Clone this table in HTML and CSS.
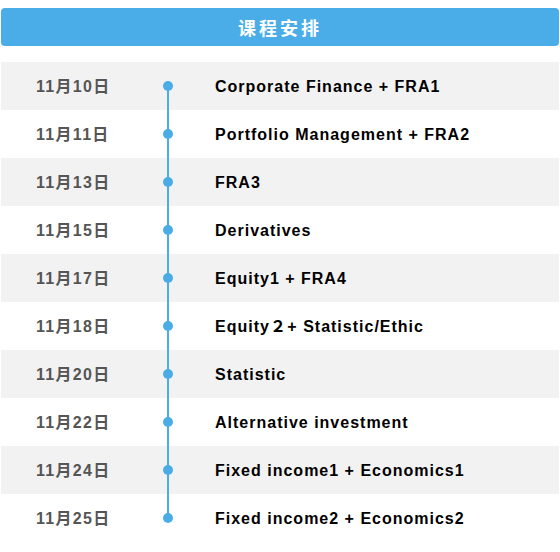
FILE: index.html
```html
<!DOCTYPE html>
<html lang="zh">
<head>
<meta charset="utf-8">
<link rel="stylesheet" href="styles.css">
</head>
<body>
<div class="page">
  <div class="header">课程安排</div>
  <div class="list">
    <div class="row gray"><div class="date">11月10日</div><div class="node first"><span class="dot"></span></div><div class="title">Corporate Finance + FRA1</div></div>
    <div class="row"><div class="date">11月11日</div><div class="node"><span class="dot"></span></div><div class="title">Portfolio Management + FRA2</div></div>
    <div class="row gray"><div class="date">11月13日</div><div class="node"><span class="dot"></span></div><div class="title">FRA3</div></div>
    <div class="row"><div class="date">11月15日</div><div class="node"><span class="dot"></span></div><div class="title">Derivatives</div></div>
    <div class="row gray"><div class="date">11月17日</div><div class="node"><span class="dot"></span></div><div class="title">Equity1 + FRA4</div></div>
    <div class="row"><div class="date">11月18日</div><div class="node"><span class="dot"></span></div><div class="title">Equity<span class="fw">２</span> + Statistic/Ethic</div></div>
    <div class="row gray"><div class="date">11月20日</div><div class="node"><span class="dot"></span></div><div class="title">Statistic</div></div>
    <div class="row"><div class="date">11月22日</div><div class="node"><span class="dot"></span></div><div class="title">Alternative investment</div></div>
    <div class="row gray"><div class="date">11月24日</div><div class="node"><span class="dot"></span></div><div class="title">Fixed income1 + Economics1</div></div>
    <div class="row"><div class="date">11月25日</div><div class="node last"><span class="dot"></span></div><div class="title">Fixed income2 + Economics2</div></div>
  </div>
</div>
</body>
</html>
```
FILE: styles.css
```css
* { box-sizing: border-box; }
html, body { margin: 0; padding: 0; background: #fff; }
body { font-family: "Liberation Sans", Arial, "Noto Sans CJK SC", sans-serif; }
.page { padding: 8px 1px 0 1px; width: 560px; }
.header {
  height: 38px;
  background: #4aade8;
  border-radius: 4px;
  color: #fff;
  font-size: 18px;
  font-weight: bold;
  letter-spacing: 3px;
  display: flex;
  align-items: center;
  justify-content: center;
}
.list { margin-top: 16px; }
.row {
  height: 48px;
  display: grid;
  grid-template-columns: 127px 10px 1fr;
  align-items: center;
  padding-left: 35px;
  background: #fff;
}
.row.gray { background: #f2f2f2; }
.date {
  color: #555;
  font-size: 16px;
  font-weight: bold;
  letter-spacing: 1.3px;
  line-height: 16px;
  height: 16px;
  margin-top: 1px;
}
.node {
  position: relative;
  height: 48px;
  display: flex;
  align-items: center;
  justify-content: center;
}
.node::before {
  content: "";
  position: absolute;
  left: 4px;
  width: 2px;
  top: 0;
  bottom: 0;
  background: #4aade8;
}
.node.first::before { top: 24px; }
.node.last::before { bottom: 24px; }
.dot {
  position: relative;
  width: 10px;
  height: 10px;
  border-radius: 50%;
  background: #4aade8;
}
.title {
  padding-left: 42px;
  color: #000;
  font-size: 16px;
  font-weight: bold;
  letter-spacing: 1px;
  white-space: nowrap;
  line-height: 16px;
  margin-top: 1px;
}
.fw { letter-spacing: -4px; }
```
